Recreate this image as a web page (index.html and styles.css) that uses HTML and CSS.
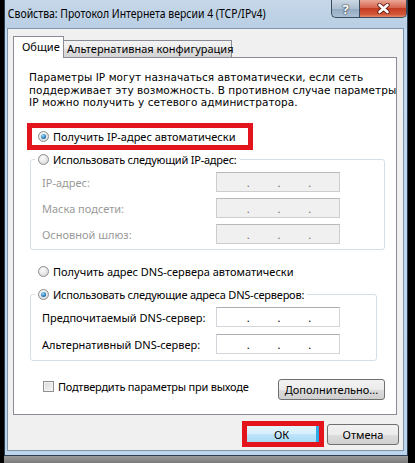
FILE: index.html
```html
<!DOCTYPE html>
<html lang="ru">
<head>
  <meta charset="UTF-8">
  <title>Свойства: Протокол Интернета версии 4 (TCP/IPv4)</title>
  <link rel="stylesheet" href="styles.css">
</head>
<body>
  <div class="window">
    <div class="titlebar">
      <span class="title">Свойства: Протокол Интернета версии 4 (TCP/IPv4)</span>
      <div class="caption-buttons">
        <div class="cap-btn help">?</div>
        <div class="cap-btn close">
          <svg width="15" height="11" viewBox="0 0 15 11">
            <path d="M3.5 2 L11.5 9 M11.5 2 L3.5 9" stroke="#6b2416" stroke-width="4.4" stroke-linecap="round"/>
            <path d="M3.5 2 L11.5 9 M11.5 2 L3.5 9" stroke="#fff" stroke-width="2.6" stroke-linecap="round"/>
          </svg>
        </div>
      </div>
    </div>

    <div class="client">
      <div class="tabs">
        <div class="tab active">Общие</div>
        <div class="tab">Альтернативная конфигурация</div>
      </div>

      <div class="panel">
        <p class="intro">Параметры IP могут назначаться автоматически, если сеть<br>поддерживает эту возможность. В противном случае параметры<br>IP можно получить у сетевого администратора.</p>

        <div class="highlight">
          <label class="option"><span class="radio checked"></span>Получить IP-адрес автоматически</label>
        </div>

        <fieldset class="group ip-group">
          <legend><label class="option"><span class="radio"></span>Использовать следующий IP-адрес:</label></legend>
          <div class="fields disabled">
            <span>IP-адрес:</span>
            <div class="ip-box"><i>.</i><i>.</i><i>.</i></div>
            <span>Маска подсети:</span>
            <div class="ip-box"><i>.</i><i>.</i><i>.</i></div>
            <span>Основной шлюз:</span>
            <div class="ip-box"><i>.</i><i>.</i><i>.</i></div>
          </div>
        </fieldset>

        <label class="option dns-auto"><span class="radio"></span>Получить адрес DNS-сервера автоматически</label>

        <fieldset class="group dns-group">
          <legend><label class="option"><span class="radio checked"></span>Использовать следующие адреса DNS-серверов:</label></legend>
          <div class="fields">
            <span>Предпочитаемый DNS-сервер:</span>
            <div class="ip-box"><i>.</i><i>.</i><i>.</i></div>
            <span>Альтернативный DNS-сервер:</span>
            <div class="ip-box"><i>.</i><i>.</i><i>.</i></div>
          </div>
        </fieldset>

        <div class="panel-footer">
          <label class="option confirm"><span class="checkbox"></span>Подтвердить параметры при выходе</label>
          <button class="btn advanced">Дополнительно...</button>
        </div>
      </div>

      <div class="dialog-buttons">
        <div class="highlight ok-mark"><button class="btn ok">ОК</button></div>
        <button class="btn cancel">Отмена</button>
      </div>
    </div>
  </div>
  <div class="floor"></div>
</body>
</html>
```

FILE: styles.css
```css
* {
  box-sizing: border-box;
}

body {
  margin: 0;
  width: 415px;
  height: 463px;
  overflow: hidden;
  background: #000;
  font-family: 'Noto Sans', 'Open Sans', sans-serif;
  font-size: 11px;
  color: #000;
}

.window {
  width: 404px;
  height: 456px;
  margin-left: 4px;
  padding: 0 3px 4px 2px;
  border: 1px solid #2c3e52;
  border-top: none;
  background: linear-gradient(to bottom, #c6d7e8 0, #b9cfe4 28px, #c2d9ef 29px, #bcd5ed 100%);
}

.titlebar {
  height: 28px;
  display: flex;
  align-items: flex-start;
}

.title {
  padding-left: 1px;
  line-height: 28px;
  font-size: 12px;
  white-space: nowrap;
  transform: scaleX(0.87);
  transform-origin: left center;
}

.caption-buttons {
  display: flex;
  margin-left: auto;
  margin-right: -3px;
}

.cap-btn {
  height: 18px;
  display: flex;
  align-items: center;
  justify-content: center;
  border: 1px solid #3b4a5c;
  border-top: none;
  color: #fff;
  font-weight: bold;
}

.help {
  width: 28px;
  border-right: none;
  border-radius: 0 0 0 5px;
  background: linear-gradient(#cbd8e4, #aebfd0 50%, #93a9bf 51%, #aac0d4);
  font-size: 13px;
  text-shadow: 0 0 1px #1e2c3a, 0 0 2px #1e2c3a;
}

.close {
  width: 48px;
  border-radius: 0 0 5px 0;
  background: linear-gradient(#e9a797, #d6654e 45%, #c43b23 50%, #d45839 85%, #e78b6a);
}

.client {
  height: 423px;
  background: #f0f0f0;
  border: 1px solid #8094aa;
  padding: 7px 6px 0 5px;
}

/* tabs */
.tabs {
  display: flex;
  height: 22px;
  margin-bottom: -1px;
  position: relative;
  z-index: 1;
}

.tab {
  width: 168px;
  height: 17px;
  margin-top: 4px;
  padding-left: 3px;
  line-height: 15px;
  border: 1px solid #898c95;
  border-left: none;
  border-bottom: none;
  background: linear-gradient(#f3f3f3, #ececec 50%, #dfdfdf 51%, #d4d4d4);
  white-space: nowrap;
}

.tab.active {
  width: 51px;
  height: 22px;
  margin-top: 0;
  padding-left: 8px;
  line-height: 20px;
  border-left: 1px solid #898c95;
  background: #fff;
}

.panel {
  height: 358px;
  background: #fff;
  border: 1px solid #898c95;
  padding: 13px 11px 0 13px;
}

.intro {
  margin: 0 0 0 2px;
  font-family: 'DejaVu Sans', sans-serif;
  font-size: 10.5px;
  letter-spacing: 0.05px;
  line-height: 12.5px;
  white-space: nowrap;
}

.highlight {
  border: 5px solid #e3141c;
}

.panel .highlight {
  width: 226px;
  margin-top: 14.5px;
  padding: 1px 0 1px 6px;
}

/* radios, checkbox */
.option {
  display: flex;
  align-items: center;
  line-height: 15px;
  white-space: nowrap;
}

.radio,
.checkbox {
  flex: none;
  width: 11px;
  height: 11px;
  margin-right: 4px;
  border: 1px solid #8b8d90;
  background: radial-gradient(circle at 40% 35%, #fdfdfd, #e2e2e2 60%, #cfcfcf);
  position: relative;
}

.radio {
  border-radius: 50%;
}

.radio.checked::after {
  content: "";
  position: absolute;
  left: 2px;
  top: 2px;
  width: 5px;
  height: 5px;
  border-radius: 50%;
  background: radial-gradient(circle at 40% 35%, #a8e2f8, #2a7fbf 55%, #0f4471);
}

.checkbox {
  border-color: #8f8f8f;
  background: linear-gradient(135deg, #d8d8d8, #f6f6f6);
  box-shadow: inset 0 0 0 1px #f4f4f4;
}

/* group boxes */
.group {
  margin: 2px 0 0 3px;
  padding: 5px 0 5px 0;
  border: 1px solid #d5dfe5;
  border-radius: 3px;
  min-width: 0;
}

.group legend {
  margin-left: 4px;
  padding: 0 3px;
  letter-spacing: -0.22px;
}

.ip-group {
  width: 355px;
}

.dns-group {
  width: 347px;
  margin-top: 8px;
  padding: 5.5px 0 6px 0;
}

.fields {
  display: grid;
  grid-template-columns: 174px 124px;
  grid-auto-rows: 20px;
  row-gap: 6px;
  align-items: center;
  padding-left: 11px;
}

.dns-group .fields {
  row-gap: 7px;
}

.fields.disabled {
  color: #9a9a9a;
}

.ip-box {
  height: 20px;
  display: flex;
  justify-content: space-evenly;
  padding-left: 2px;
  border: 1px solid #d2d6db;
  border-top-color: #abadb3;
  background: #fff;
  line-height: 20px;
}

.ip-box i {
  font-style: normal;
}

.disabled .ip-box {
  background: #f0f0f0;
  border-color: #cdcdcd;
  border-top-color: #b9b9b9;
  color: #6d6d6d;
}

.dns-auto {
  margin: 13.5px 0 0 11px;
}

.panel-footer {
  display: flex;
  align-items: flex-start;
  justify-content: space-between;
  margin-top: 18px;
}

.confirm {
  letter-spacing: -0.22px;
}

.panel-footer .checkbox {
  margin-left: 16px;
}

/* buttons */
.btn {
  height: 21px;
  padding: 0;
  font-family: inherit;
  font-size: 11px;
  color: #000;
  border: 1px solid #707070;
  border-radius: 3px;
  background: linear-gradient(#f2f2f2, #ebebeb 50%, #dddddd 51%, #cfcfcf);
}

.advanced {
  width: 107px;
}

.dialog-buttons {
  display: flex;
  justify-content: flex-end;
  align-items: center;
  gap: 3px;
  margin-top: 6px;
  margin-right: -2px;
}

.ok-mark {
  width: 82px;
  height: 26px;
}

.ok {
  display: block;
  width: 100%;
  height: 100%;
  border: none;
  border-radius: 0;
  border-right: 3px solid #2fa8e6;
  background: linear-gradient(#e4f4fc, #d6effc 50%, #bfe5fa 51%, #a9daf5);
}

.cancel {
  width: 72px;
}

.floor {
  width: 404px;
  height: 7px;
  margin-left: 4px;
  background: linear-gradient(#9a9a9a, #7a7a7a);
}
```
